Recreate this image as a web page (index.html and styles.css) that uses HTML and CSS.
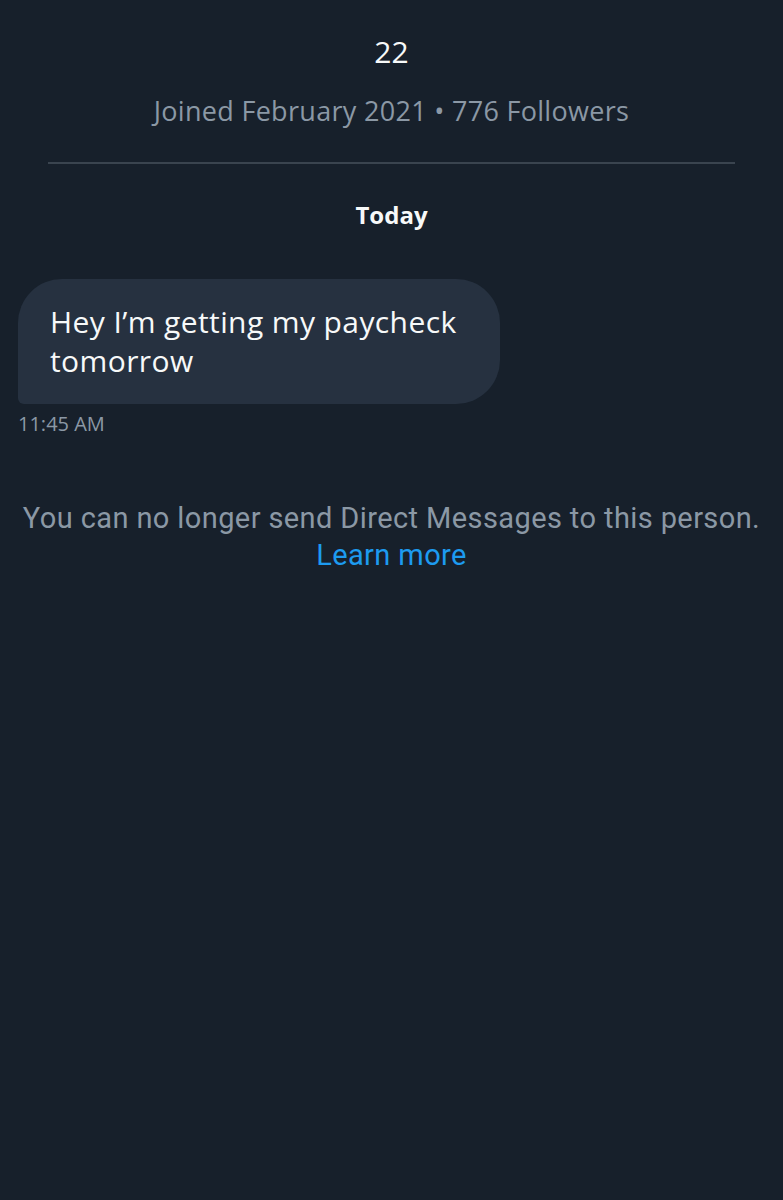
FILE: index.html
```html
<!DOCTYPE html>
<html lang="en">
<head>
    <meta charset="UTF-8">
    <meta name="viewport" content="width=device-width, initial-scale=1.0">
    <title>Direct Messages</title>
    <link rel="stylesheet" href="styles.css">
</head>
<body>
    <main class="conversation">
        <section class="profile-info">
            <div class="profile-handle">22</div>
            <div class="profile-meta">Joined February 2021 • 776 Followers</div>
        </section>
        <div class="day-label">Today</div>
        <section class="messages">
            <div class="message">
                <div class="bubble">Hey I’m getting my paycheck tomorrow</div>
                <div class="timestamp">11:45 AM</div>
            </div>
        </section>
        <p class="notice">
            You can no longer send Direct Messages to this person.<br>
            <a href="#" class="learn-more">Learn more</a>
        </p>
    </main>
</body>
</html>
```

FILE: styles.css
```css
body {
    margin: 0;
    padding: 0;
    background-color: #17202b;
    color: #e7e9ea;
    font-family: "Open Sans", "Noto Sans", Arial, sans-serif;
    min-height: 1200px;
}

.conversation {
    padding: 0 18px;
}

.profile-info {
    margin: 0 30px;
    padding-top: 32px;
    padding-bottom: 32px;
    border-bottom: 2px solid #3a444f;
    text-align: center;
}

.profile-handle {
    font-size: 30px;
    line-height: 40px;
    color: #f7f9f9;
}

.profile-meta {
    margin-top: 20px;
    font-size: 27px;
    line-height: 38px;
    color: #8b98a5;
    letter-spacing: 0.3px;
}

.day-label {
    margin-top: 34px;
    text-align: center;
    font-size: 24px;
    font-weight: 700;
    line-height: 34px;
    color: #f7f9f9;
}

.messages {
    margin-top: 47px;
}

.message {
    display: flex;
    flex-direction: column;
    align-items: flex-start;
}

.bubble {
    width: 418px;
    padding: 23px 32px 24px 32px;
    background-color: #263140;
    border-radius: 44px 44px 44px 6px;
    font-size: 30px;
    line-height: 39px;
    color: #f7f9f9;
    letter-spacing: 0.4px;
}

.timestamp {
    margin-top: 6px;
    font-size: 20px;
    line-height: 28px;
    color: #8b98a5;
}

.notice {
    margin: 62px -18px 0;
    text-align: center;
    font-size: 29px;
    line-height: 37px;
    color: #8b98a5;
    font-family: "Roboto", "Liberation Sans", sans-serif;
    letter-spacing: 0.4px;
}

.learn-more {
    color: #1d9bf0;
    text-decoration: none;
}
```
